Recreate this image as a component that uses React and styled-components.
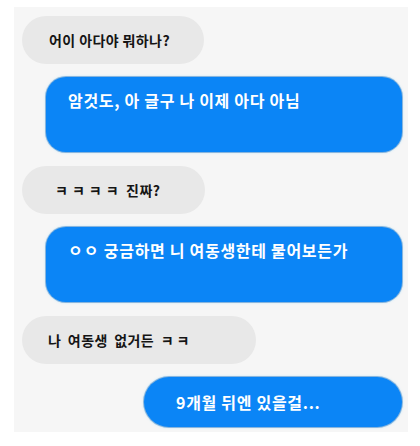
import React from "react";
import styled, { createGlobalStyle } from "styled-components";

const GlobalStyle = createGlobalStyle`
  html, body {
    margin: 0;
    padding: 0;
    background: #ffffff;
  }
  body {
    font-family: "Noto Sans CJK KR", "Noto Sans", sans-serif;
  }
`;

const Panel = styled.div`
  box-sizing: border-box;
  margin: 7px 0 0 14px;
  width: 394px;
  height: 425px;
  background: #f6f6f6;
  padding: 9px 6px 0 8px;
  display: flex;
  flex-direction: column;
  gap: 13.4px;
`;

const Received = styled.div`
  box-sizing: border-box;
  align-self: flex-start;
  width: ${props => props.width}px;
  height: 48px;
  border-radius: 24px;
  background: #e8e8e8;
  padding-left: ${props => props.inset || 26}px;
  display: flex;
  align-items: center;
  white-space: pre;
  color: #151515;
  font-size: 14px;
  font-weight: 700;
  letter-spacing: 0.4px;
  word-spacing: ${props => props.spread || 0}px;
`;

// the ㅋ / ㅇ runs sit on a wider pitch than the syllables
const Jamo = styled.span`
  letter-spacing: ${props => props.pitch || 3}px;
`;

const Sent = styled.div`
  box-sizing: border-box;
  align-self: flex-end;
  width: ${props => props.width}px;
  height: ${props => (props.tall ? 75 : 50)}px;
  border-radius: ${props => (props.tall ? 20 : 25)}px;
  background: #0b85f6;
  box-shadow: 0 0 0 1px rgba(10, 80, 170, 0.35), 0 0 2px 1px rgba(140, 220, 255, 0.5);
  padding-left: ${props => props.inset || 22}px;
  padding-top: ${props => (props.tall ? 12 : 0)}px;
  display: flex;
  align-items: ${props => (props.tall ? "flex-start" : "center")};
  white-space: pre;
  color: #ffffff;
  font-size: 16px;
  line-height: 22px;
  font-weight: 700;
  letter-spacing: 0.7px;
`;

export default function App() {
  return (
    <>
      <GlobalStyle />
      <Panel>
        <Received width={182} inset={27}>어이 아다야 뭐하나?</Received>
        <Sent width={356} tall>암것도, 아 글구 나 이제 아다 아님</Sent>
        <Received width={183} inset={33}>
          <Jamo pitch={4}>ㅋㅋㅋㅋ</Jamo> 진짜?
        </Received>
        <Sent width={356} tall inset={22}>
          <Jamo pitch={1}>ㅇㅇ</Jamo> 궁금하면 니 여동생한테 물어보든가
        </Sent>
        <Received width={234} inset={26} spread={3}>
          나 여동생 없거든 <Jamo pitch={3}>ㅋㅋ</Jamo>
        </Received>
        <Sent width={258} inset={32}>9개월 뒤엔 있을걸...</Sent>
      </Panel>
    </>
  );
}
